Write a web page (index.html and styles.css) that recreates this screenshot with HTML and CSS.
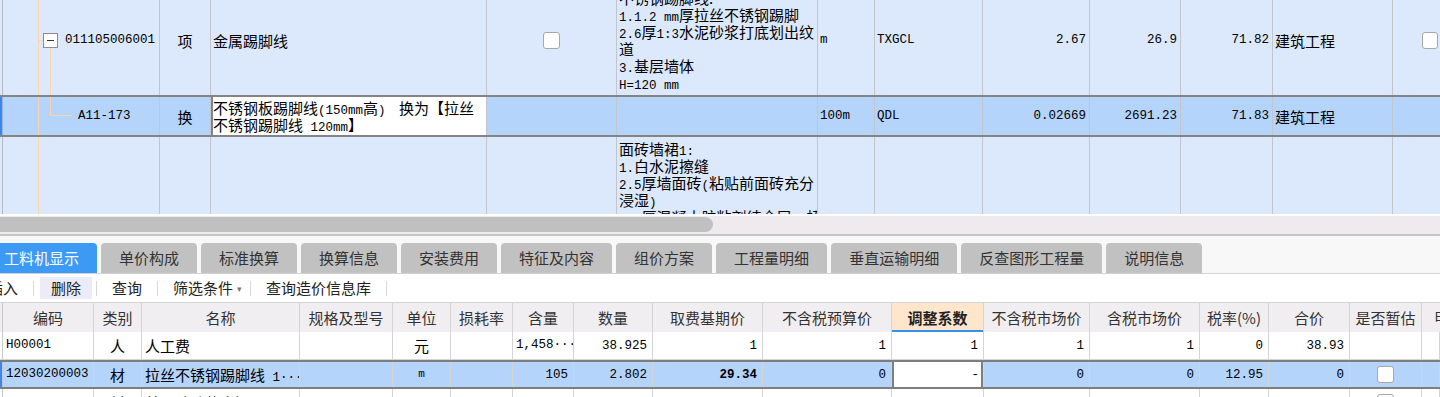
FILE: index.html
```html
<!DOCTYPE html>
<html lang="zh-CN">
<head>
  <meta charset="UTF-8">
  <title>分部分项</title>
  <link rel="stylesheet" href="styles.css">
</head>
<body>
  <!-- 清单 / 定额 grid, scrolled a little -->
  <div class="upper">
    <div class="sheet">
      <div class="urow r-item">
        <div class="gut"></div>
        <div class="c code">
          <span class="tbox"></span><span class="n">011105006001</span>
          <span class="tdown"></span>
        </div>
        <div class="c mid">项</div>
        <div class="c">金属踢脚线</div>
        <div class="c mid"><span class="chk"></span></div>
        <div class="c feat">
          <div>
            <div class="ln">不锈钢踢脚线:</div>
            <div class="ln"><span class="n">1.1.2 mm</span>厚拉丝不锈钢踢脚</div>
            <div class="ln"><span class="n">2.6</span>厚<span class="n">1:3</span>水泥砂浆打底划出纹</div>
            <div class="ln">道</div>
            <div class="ln"><span class="n">3.</span>基层墙体</div>
            <div class="ln"><span class="n">H=120 mm</span></div>
          </div>
        </div>
        <div class="c"><span class="n">m</span></div>
        <div class="c"><span class="n">TXGCL</span></div>
        <div class="c num">2.67</div>
        <div class="c num">26.9</div>
        <div class="c num">71.82</div>
        <div class="c">建筑工程</div>
        <div class="c last"><span class="chk"></span></div>
      </div>

      <div class="urow r-sel">
        <div class="gut"></div>
        <div class="c code sub">
          <span class="tend"></span><span class="n">A11-173</span>
        </div>
        <div class="c mid">换</div>
        <div class="c edit">
          <div>
            <div class="ln">不锈钢板踢脚线<span class="n">(150mm</span>高<span class="n">)</span>&nbsp;&nbsp;&nbsp;&nbsp;换为【拉丝</div>
            <div class="ln">不锈钢踢脚线<span class="n">&nbsp;120mm</span>】</div>
          </div>
        </div>
        <div class="c"></div>
        <div class="c"></div>
        <div class="c"><span class="n">100m</span></div>
        <div class="c"><span class="n">QDL</span></div>
        <div class="c num">0.02669</div>
        <div class="c num">2691.23</div>
        <div class="c num">71.83</div>
        <div class="c">建筑工程</div>
        <div class="c last"></div>
      </div>

      <div class="urow r-next">
        <div class="gut"></div>
        <div class="c code"></div>
        <div class="c"></div>
        <div class="c"></div>
        <div class="c"></div>
        <div class="c feat top">
          <div>
            <div class="ln">面砖墙裙<span class="n">1:</span></div>
            <div class="ln"><span class="n">1.</span>白水泥擦缝</div>
            <div class="ln"><span class="n">2.5</span>厚墙面砖<span class="n">(</span>粘贴前面砖充分</div>
            <div class="ln">浸湿<span class="n">)</span></div>
            <div class="ln"><span class="n">3.4</span>厚混凝土胶粘剂结合层，桥</div>
          </div>
        </div>
        <div class="c"></div>
        <div class="c"></div>
        <div class="c"></div>
        <div class="c"></div>
        <div class="c"></div>
        <div class="c"></div>
        <div class="c last"></div>
      </div>
    </div>
  </div>

  <div class="hscroll"><div class="thumb"></div></div>

  <div class="tabbar">
    <div class="tab on">工料机显示</div>
    <div class="tab">单价构成</div>
    <div class="tab">标准换算</div>
    <div class="tab">换算信息</div>
    <div class="tab">安装费用</div>
    <div class="tab">特征及内容</div>
    <div class="tab">组价方案</div>
    <div class="tab">工程量明细</div>
    <div class="tab">垂直运输明细</div>
    <div class="tab">反查图形工程量</div>
    <div class="tab">说明信息</div>
  </div>

  <div class="toolbar">
    <div class="tool first">插入</div>
    <div class="sep"></div>
    <div class="tool hot">删除</div>
    <div class="sep"></div>
    <div class="tool">查询</div>
    <div class="sep"></div>
    <div class="tool drop">筛选条件<span class="caret">▾</span></div>
    <div class="sep"></div>
    <div class="tool">查询造价信息库</div>
    <div class="sep"></div>
  </div>

  <!-- 工料机 grid -->
  <div class="lower">
    <div class="lrow head">
      <div class="gut"></div>
      <div class="h">编码</div>
      <div class="h">类别</div>
      <div class="h">名称</div>
      <div class="h">规格及型号</div>
      <div class="h">单位</div>
      <div class="h">损耗率</div>
      <div class="h">含量</div>
      <div class="h">数量</div>
      <div class="h">取费基期价</div>
      <div class="h">不含税预算价</div>
      <div class="h focus">调整系数</div>
      <div class="h">不含税市场价</div>
      <div class="h">含税市场价</div>
      <div class="h">税率(%)</div>
      <div class="h">合价</div>
      <div class="h">是否暂估</div>
      <div class="h more">甲供数量</div>
    </div>

    <div class="lrow">
      <div class="gut"></div>
      <div class="d"><span class="n">H00001</span></div>
      <div class="d mid">人</div>
      <div class="d">人工费</div>
      <div class="d"></div>
      <div class="d mid">元</div>
      <div class="d"></div>
      <div class="d"><span class="n">1,458···</span></div>
      <div class="d num">38.925</div>
      <div class="d num">1</div>
      <div class="d num">1</div>
      <div class="d num">1</div>
      <div class="d num">1</div>
      <div class="d num">1</div>
      <div class="d num">0</div>
      <div class="d num">38.93</div>
      <div class="d"></div>
      <div class="d"></div>
    </div>

    <div class="lrow l-sel">
      <div class="gut"></div>
      <div class="d"><span class="n">12030200003</span></div>
      <div class="d mid">材</div>
      <div class="d"><span>拉丝不锈钢踢脚线<span class="n">&nbsp;1···</span></span></div>
      <div class="d"></div>
      <div class="d mid"><span class="n small">m</span></div>
      <div class="d"></div>
      <div class="d num">105</div>
      <div class="d num">2.802</div>
      <div class="d num bold">29.34</div>
      <div class="d num">0</div>
      <div class="d num edit">-</div>
      <div class="d num">0</div>
      <div class="d num">0</div>
      <div class="d num">12.95</div>
      <div class="d num">0</div>
      <div class="d mid"><span class="chk"></span></div>
      <div class="d"></div>
    </div>

    <div class="lrow">
      <div class="gut"></div>
      <div class="d"></div>
      <div class="d mid">材</div>
      <div class="d">普通硅酸盐水泥</div>
      <div class="d"></div>
      <div class="d"></div>
      <div class="d"></div>
      <div class="d"></div>
      <div class="d"></div>
      <div class="d"></div>
      <div class="d"></div>
      <div class="d"></div>
      <div class="d"></div>
      <div class="d"></div>
      <div class="d"></div>
      <div class="d"></div>
      <div class="d mid"><span class="chk"></span></div>
      <div class="d"></div>
    </div>
  </div>
</body>
</html>
```

FILE: styles.css
```css
* {
  box-sizing: border-box;
}
body {
  margin: 0;
  background: #fff;
  font-family: "Noto Sans CJK SC", sans-serif;
  font-size: 15px;
  color: #000;
  overflow: hidden;
  height: 397px;
}
.n {
  font-family: "Liberation Mono", monospace;
  font-size: 12.5px;
  line-height: 1;
}
.chk {
  display: inline-block;
  width: 17px;
  height: 17px;
  background: #fff;
  border: 1px solid #a8a8a8;
  border-radius: 3px;
}

/* upper grid */
.upper {
  height: 214px;
  overflow: hidden;
  background: #dce9fd;
}
.sheet {
  margin-top: -15px;
}
.urow {
  display: grid;
  grid-template-columns: 3px 157px 51px 276px 130px 201px 57px 108px 107px 91px 92px 120px 1fr;
}
.r-item {
  height: 110px;
}
.r-sel {
  height: 42px;
  background: #b4d4fc;
  border-top: 2px solid #848484;
  border-bottom: 2px solid #848484;
}
.r-next {
  height: 140px;
}
.gut {
  border-right: 1px solid #b8bac4;
}
.r-sel .gut {
  background: #3b87ea;
  border-right: 1px solid #9db6d6;
}
.c {
  display: flex;
  align-items: center;
  padding: 0 2px;
  border-right: 1px solid #c3c5cd;
  overflow: hidden;
  white-space: nowrap;
  line-height: 17px;
  min-width: 0;
}
.ln {
  height: 17px;
  line-height: 17px;
  white-space: nowrap;
}
.c.mid {
  justify-content: center;
}
.c.num,
.d.num {
  justify-content: flex-end;
  padding-right: 3px;
  font-family: "Liberation Mono", monospace;
  font-size: 12.5px;
}
.c.top {
  align-items: flex-start;
  padding-top: 3px;
}
.c.last {
  padding-left: 29px;
  border-right: none;
}
.c.edit {
  background: #fff;
  box-shadow: inset 2px 0 #848484;
}

/* tree connectors */
.code {
  position: relative;
  padding-left: 40px;
  background: linear-gradient(#fdd4a9, #fdd4a9) 35px 0 / 1px 100% no-repeat;
}
.code.sub {
  padding-left: 75px;
}
.tbox {
  position: relative;
  width: 15px;
  height: 15px;
  margin-right: 7px;
  background: #fff;
  border: 1px solid #8c8c8c;
  flex: none;
}
.tbox::before {
  content: "";
  position: absolute;
  left: -6px;
  top: 6px;
  width: 5px;
  height: 1px;
  background: #fdd4a9;
}
.tbox::after {
  content: "";
  position: absolute;
  left: 3px;
  top: 6px;
  width: 7px;
  height: 1px;
  background: #333;
}
.tdown {
  position: absolute;
  left: 47px;
  top: calc(50% + 8px);
  bottom: 0;
  width: 1px;
  background: #fdd4a9;
}
.tend {
  position: absolute;
  left: 47px;
  top: 0;
  height: 50%;
  width: 22px;
  border-left: 1px solid #fdd4a9;
  border-bottom: 1px solid #fdd4a9;
}

/* horizontal scrollbar */
.hscroll {
  height: 22px;
  padding-top: 1px;
  background: #efeaee;
  border-top: 2px solid #fff;
  border-bottom: 2px solid #c6c6c6;
}
.thumb {
  width: 713px;
  height: 15px;
  background: #c0c0c0;
  border-radius: 0 8px 8px 0;
}

/* tabs */
.tabbar {
  display: flex;
  gap: 4px;
  height: 38px;
  padding-top: 7px;
  background: #f8f8f8;
  border-bottom: 1px solid #d2d2d2;
}
.tab {
  padding: 0 18px;
  height: 30px;
  line-height: 30px;
  background: #c1c1c1;
  color: #333;
  border-radius: 4px 4px 0 0;
  white-space: nowrap;
}
.tab.on {
  margin-left: -14px;
  background: #3c9af4;
  color: #fff;
}

/* toolbar */
.toolbar {
  display: flex;
  align-items: center;
  height: 28px;
  color: #222;
}
.tool {
  padding: 0 11px;
  line-height: 22px;
  white-space: nowrap;
}
.tool.first {
  margin-left: -23px;
}
.tool.hot {
  margin-left: 2px;
  background: #ececf9;
}
.tool.drop {
  padding-right: 4px;
}
.caret {
  font-size: 9px;
  color: #777;
  margin-left: 4px;
  vertical-align: 2px;
}
.sep {
  width: 1px;
  height: 15px;
  margin: 0 4px;
  background: #d8d8d8;
}

/* lower grid */
.lower {
  border-top: 1px solid #d4d4d4;
}
.lrow {
  display: grid;
  grid-template-columns: 3px 91px 48px 158px 93px 58px 62px 61px 79px 110px 129px 92px 106px 110px 69px 81px 72px 1fr;
  height: 28px;
  border-bottom: 1px solid #d4d4d4;
}
.lrow.head {
  height: 29px;
  background: #f1eef2;
  border-bottom: none;
}
.lrow .gut {
  border-right: 1px solid #c8c8c8;
}
.h {
  display: flex;
  align-items: center;
  justify-content: center;
  border-right: 1px solid #d4d4d4;
  color: #333;
  white-space: nowrap;
  overflow: hidden;
}
.h.focus {
  background: #fde6cc;
  font-weight: bold;
  color: #222;
  box-shadow: inset 0 -2px #3a8ee8;
}
.h.more {
  justify-content: flex-start;
  padding-left: 12px;
  border-right: none;
}
.d {
  display: flex;
  align-items: center;
  padding: 0 3px;
  border-right: 1px solid #d4d4d4;
  white-space: nowrap;
  overflow: hidden;
}
.d.mid {
  justify-content: center;
}
.d.num {
  padding-right: 5px;
}
.d.bold {
  font-weight: bold;
}
.l-sel {
  height: 29px;
  background: #b4d4fc;
  border-top: 2px solid #7e7e7e;
  border-bottom: 2px solid #7e7e7e;
}
.l-sel .gut {
  background: #3b87ea;
}
.d.edit {
  background: #fff;
  box-shadow: inset 2px 0 #7e7e7e, inset -2px 0 #7e7e7e;
  padding-right: 4px;
}
.small {
  font-size: 11px;
}
```
